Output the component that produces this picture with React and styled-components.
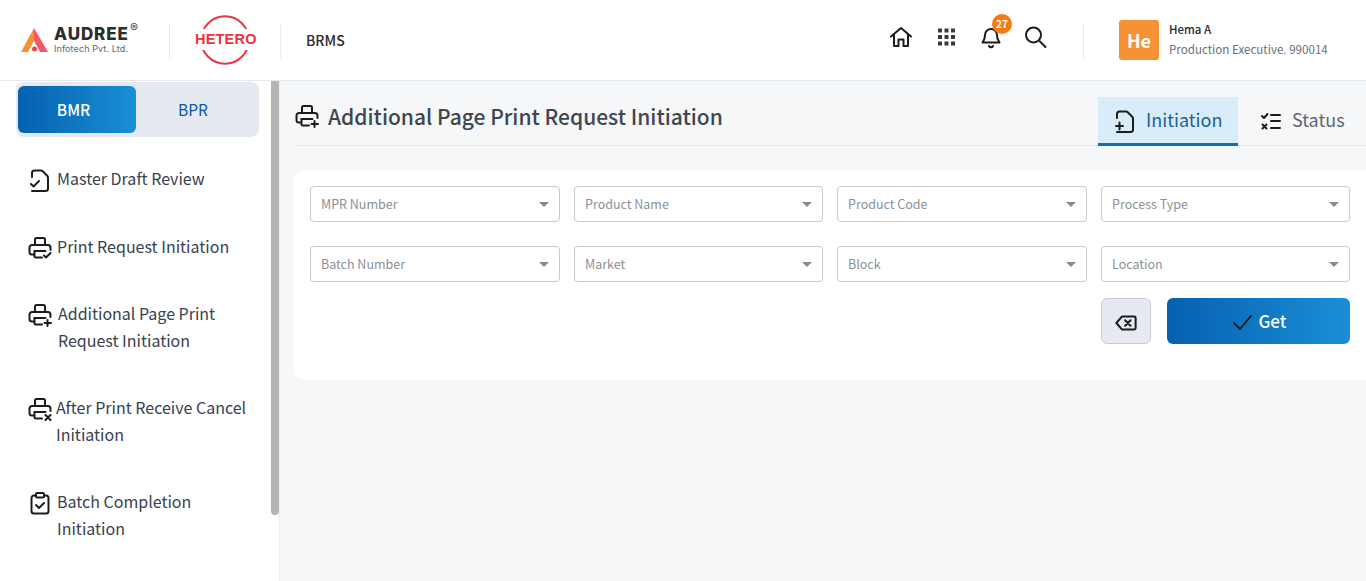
import React from "react"
import styled, { createGlobalStyle } from "styled-components"

const FONT = `"Noto Sans CJK JP", "Noto Sans", sans-serif`
const GRADIENT = "linear-gradient(90deg, #0560b0 0%, #1a8fd6 100%)"

const GlobalStyle = createGlobalStyle`
  html, body {
    margin: 0;
    padding: 0;
    height: 100%;
    overflow: hidden;
    background: #fff;
    font-family: ${FONT};
  }
  * { box-sizing: border-box; }
`

const Page = styled.div`
  width: 1366px;
  height: 581px;
  display: flex;
  flex-direction: column;
  overflow: hidden;
`

const Header = styled.header`
  height: 81px;
  flex: none;
  display: flex;
  align-items: center;
  background: #fff;
  border-bottom: 1px solid #e5e8ee;
`

const LogoCell = styled.div`
  width: 170px;
  height: 35px;
  padding-left: 21px;
  display: flex;
  align-items: center;
  border-right: 1px solid #e8eaee;
`

const AudreeWords = styled.div`
  position: relative;
  margin-left: 6px;
  display: flex;
  flex-direction: column;
  gap: 3px;
  line-height: 1;
`

const AudreeName = styled.span`
  font-family: "Inter", sans-serif;
  font-weight: 800;
  font-size: 17px;
  line-height: 14px;
  letter-spacing: 0.9px;
  color: #2c2c2c;
`

const AudreeSub = styled.span`
  font-family: "Inter", sans-serif;
  font-size: 9px;
  line-height: 10px;
  letter-spacing: 0.1px;
  color: #666;
`

const Registered = styled.span`
  position: absolute;
  left: 76px;
  top: -5px;
  font-family: "Inter", sans-serif;
  font-size: 12px;
  color: #444;
`

const HeteroCell = styled.div`
  width: 111px;
  height: 35px;
  padding-left: 30px;
  display: flex;
  align-items: center;
  border-right: 1px solid #e8eaee;
`

const HeteroMark = styled.div`
  position: relative;
  width: 50px;
  height: 50px;
  flex: none;
`

const HeteroText = styled.span`
  position: absolute;
  left: -5px;
  top: 14px;
  width: 60px;
  text-align: center;
  background: #fff;
  font-family: "Liberation Sans", sans-serif;
  font-weight: 700;
  font-size: 14.5px;
  line-height: 21px;
  letter-spacing: 0.2px;
  color: #ec3340;
`

const AppName = styled.div`
  margin-left: 25px;
  font-size: 14px;
  font-weight: 500;
  color: #2b2b2b;
`

const HeaderRight = styled.div`
  margin-left: auto;
  display: flex;
  align-items: center;
`

const IconRow = styled.div`
  display: flex;
  align-items: center;
  gap: 21px;
  margin-right: 35px;
  margin-bottom: 6px;
`

const IconSlot = styled.div`
  position: relative;
  width: 24px;
  height: 24px;
  color: #1c1c1c;

  svg { display: block; }
`

const Badge = styled.span`
  position: absolute;
  left: 13px;
  top: -11px;
  width: 20px;
  height: 20px;
  border-radius: 50%;
  background: #f57c12;
  color: #fff;
  font-size: 10px;
  font-weight: 700;
  line-height: 20px;
  text-align: center;
`

const UserBox = styled.div`
  width: 283px;
  height: 35px;
  padding-left: 35px;
  display: flex;
  align-items: center;
  border-left: 1px solid #e8eaee;
`

const Avatar = styled.div`
  width: 40px;
  height: 40px;
  border-radius: 3px;
  background: #f79234;
  color: #fff;
  font-size: 18px;
  font-weight: 700;
  display: flex;
  align-items: center;
  justify-content: center;
`

const UserText = styled.div`
  margin-left: 10px;
  margin-bottom: 2px;
  display: flex;
  flex-direction: column;
  gap: 3px;
`

const UserName = styled.span`
  font-size: 11.5px;
  font-weight: 500;
  line-height: 17px;
  color: #2a2a2a;
`

const UserRole = styled.span`
  font-size: 11.6px;
  line-height: 17px;
  color: #68707a;
`

const Body = styled.div`
  flex: 1;
  display: flex;
  min-height: 0;
`

const Sidebar = styled.aside`
  position: relative;
  width: 280px;
  flex: none;
  background: #fff;
  border-right: 1px solid #eceef2;
  padding: 1px 0 0 16px;
  overflow: hidden;
`

const ScrollThumb = styled.div`
  position: absolute;
  left: 271px;
  top: 0;
  width: 8px;
  height: 434px;
  border-radius: 0 0 4px 4px;
  background: #b5b5b5;
`

const ToggleGroup = styled.div`
  width: 243px;
  height: 55px;
  padding: 4px 2px;
  display: flex;
  border-radius: 8px;
  background: #e6e9ef;
`

const ToggleButton = styled.div`
  width: 118px;
  padding: 0 ${p => (p.$active ? 7 : 4)}px 2px 0;
  display: flex;
  align-items: center;
  justify-content: center;
  border-radius: 6px;
  font-size: 15.5px;
  font-weight: ${p => (p.$active ? 500 : 400)};
  color: ${p => (p.$active ? "#fff" : "#0b5aa3")};
  background: ${p => (p.$active ? GRADIENT : "transparent")};
`

const Menu = styled.nav`
  display: flex;
  flex-direction: column;
  padding: 28px 0 0 12px;
`

const MenuItem = styled.div`
  display: flex;
  align-items: flex-start;
  gap: ${p => p.$gap}px;
  width: 232px;
  height: ${p => p.$height}px;
  margin-bottom: ${p => p.$after}px;
  font-size: 16px;
  line-height: 27px;
  color: #39404f;

  svg {
    flex: none;
    margin-top: 3px;
    color: #1c1c1c;
  }
`

const Main = styled.main`
  flex: 1;
  min-width: 0;
  padding: 0 0 0 14px;
  background: #f6f7f9;
`

const TitleBar = styled.div`
  height: 65px;
  display: flex;
  align-items: flex-end;
  justify-content: space-between;
  border-bottom: 1px solid #e5e7eb;
`

const Title = styled.div`
  height: 49px;
  padding: 0 0 10px 1px;
  display: flex;
  align-items: center;
  gap: 9px;
  font-size: 21px;
  font-weight: 500;
  color: #3e4652;

  svg { color: #1c1c1c; }
`

const Tabs = styled.div`
  display: flex;
  margin-bottom: -1px;
`

const Tab = styled.div`
  height: 49px;
  width: ${p => p.$width}px;
  padding: 0 0 2px ${p => p.$inset}px;
  display: flex;
  align-items: center;
  gap: 9px;
  font-size: 18px;
  color: ${p => (p.$active ? "#1f5f95" : "#5e6772")};
  background: ${p => (p.$active ? "#d9ecfa" : "transparent")};
  border-bottom: 3px solid ${p => (p.$active ? "#0f6db8" : "transparent")};

  svg {
    margin-top: 3px;
    color: #1c1c1c;
  }
`

const Card = styled.section`
  margin-top: 24px;
  height: 210px;
  padding: 16px 16px 0 16px;
  background: #fff;
  border-radius: 10px 0 0 10px;
`

const FieldGrid = styled.div`
  display: grid;
  grid-template-columns: 250px 249px 250px 249px;
  column-gap: 14px;
  row-gap: 24px;
  justify-content: space-between;
`

const Select = styled.div`
  height: 36px;
  padding: 0 10px 2px;
  display: flex;
  align-items: center;
  justify-content: space-between;
  border: 1px solid #c8c8c8;
  border-radius: 4px;
  background: #fff;
  font-size: 12.5px;
  color: #8b9097;
`

const Caret = styled.span`
  width: 0;
  height: 0;
  margin-top: 2px;
  border-left: 5px solid transparent;
  border-right: 5px solid transparent;
  border-top: 5px solid #8a8a8a;
`

const Actions = styled.div`
  margin-top: 16px;
  display: flex;
  justify-content: flex-end;
  gap: 16px;
`

const ClearButton = styled.div`
  width: 50px;
  height: 46px;
  padding-top: 3px;
  display: flex;
  align-items: center;
  justify-content: center;
  border: 1px solid #c9cdd3;
  border-radius: 6px;
  background: #e6e9ef;
  color: #1c1c1c;
`

const GetButton = styled.div`
  width: 183px;
  height: 46px;
  padding-bottom: 2px;
  display: flex;
  align-items: center;
  justify-content: center;
  gap: 4px;
  border-radius: 6px;
  background: ${GRADIENT};
  color: #fff;
  font-size: 17px;
  font-weight: 500;

  svg {
    margin-top: 3px;
    color: #1c1c1c;
  }
`

const Stroke = ({ size = 24, width = 2, children }) => (
  <svg
    width={size}
    height={size}
    viewBox="0 0 24 24"
    fill="none"
    stroke="currentColor"
    strokeWidth={width}
    strokeLinecap="round"
    strokeLinejoin="round"
  >
    {children}
  </svg>
)

const PrinterBase = () => (
  <>
    <path d="M7 9V3.5A1.5 1.5 0 0 1 8.500 2h7A1.500 1.500 0 0 1 17 3.500V9" />
    <path d="M6 18.500H4A2.500 2.500 0 0 1 1.500 16v-4.500A2.500 2.500 0 0 1 4 9h16a2.500 2.500 0 0 1 2.500 2.500V14" />
    <path d="M6.500 15h11" />
    <path d="M6.500 15v5A1.500 1.500 0 0 0 8 21.500h6" />
  </>
)

const PrinterPlusIcon = () => (
  <Stroke>
    <PrinterBase />
    <path d="M19.500 17v6M16.500 20H23" />
  </Stroke>
)

const PrinterCheckIcon = () => (
  <Stroke>
    <PrinterBase />
    <path d="M16 19.500l2 2 4.500-4.500" />
  </Stroke>
)

const PrinterCrossIcon = () => (
  <Stroke>
    <PrinterBase />
    <path d="M17.500 18l5 5M22.500 18l-5 5" />
  </Stroke>
)

const FILE_OUTLINE = "M4 9V5a2.500 2.500 0 0 1 2.500-2.500H13c1 0 1.500.5 2 1l4 4c.5.5 1 1 1 2v11a2.500 2.500 0 0 1-2.500 2.500H4"

const FileCheckIcon = () => (
  <Stroke>
    <path d={FILE_OUTLINE} />
    <path d="M3 16l2.500 2.500L11 13" />
  </Stroke>
)

const FilePlusIcon = () => (
  <Stroke>
    <path d={FILE_OUTLINE} />
    <path d="M3 17h7M6.500 13.500v7" />
  </Stroke>
)

const ClipboardIcon = () => (
  <Stroke>
    <path d="M8 4.500H6A2.500 2.500 0 0 0 3.500 7v13A2.500 2.500 0 0 0 6 22.500h12a2.500 2.500 0 0 0 2.500-2.500V7A2.500 2.500 0 0 0 18 4.500h-2" />
    <rect x="8" y="2" width="8" height="4.500" rx="1.200" />
    <path d="M8 14l3 3 5-5" />
  </Stroke>
)

const HomeIcon = () => (
  <Stroke>
    <path d="M2 11.500 12 3l10 8.500" />
    <path d="M5 9.500V21h4.500v-6.500h5V21H19V9.500" />
  </Stroke>
)

const AppsIcon = () => (
  <svg width="24" height="24" viewBox="0 0 24 24" fill="#3a3a3a">
    {[3.5, 10, 16.5].flatMap(y =>
      [4, 10.5, 17].map(x => <rect key={`${x}-${y}`} x={x} y={y} width="4" height="4" />)
    )}
  </svg>
)

const BellIcon = () => (
  <Stroke>
    <path d="M6 10a6 6 0 0 1 12 0c0 5 2 6 2.500 7.500H3.500C4 16 6 15 6 10Z" />
    <path d="M10 21a2.200 2.200 0 0 0 4 0" />
  </Stroke>
)

const SearchIcon = () => (
  <Stroke>
    <circle cx="9.500" cy="10" r="7.500" />
    <path d="M16 16.500 21.500 22" />
  </Stroke>
)

const ChecklistIcon = () => (
  <Stroke>
    <path d="M3 7l2 2 3.500-4M3.500 15.500l4 4M7.500 15.500l-4 4" />
    <path d="M12 6h9M12 12h9M12 19h9" />
  </Stroke>
)

const BackspaceIcon = () => (
  <Stroke size={22} width={2.2}>
    <path d="M7.500 5H21a1.500 1.500 0 0 1 1.500 1.500v11A1.500 1.500 0 0 1 21 19H7.500L1.500 12Z" />
    <path d="m11 9 6 6M17 9l-6 6" />
  </Stroke>
)

const CheckIcon = () => (
  <Stroke width={1.8}>
    <path d="M4 13l6 6L21 6" />
  </Stroke>
)

const AudreeMark = () => (
  <svg width="27" height="24" viewBox="0 0 27 24">
    <path d="M13 0 0 24h7.500L13 13Z" fill="#f79234" />
    <path d="M13 0l14 24h-8l-6-11Z" fill="#f4566a" />
    <path d="M7 24l6-11 6 11Z" fill="#fff" />
    <circle cx="13.500" cy="21" r="2.500" fill="#ee4444" />
  </svg>
)

const HeteroRing = () => (
  <svg width="50" height="50" viewBox="0 0 50 50">
    <circle cx="25" cy="25" r="23.800" fill="none" stroke="#ec3340" strokeWidth="2" />
  </svg>
)

const menuItems = [
  { icon: <FileCheckIcon />, label: "Master Draft Review", height: 27, after: 41, gap: 5 },
  { icon: <PrinterCheckIcon />, label: "Print Request Initiation", height: 27, after: 40, gap: 5 },
  { icon: <PrinterPlusIcon />, label: "Additional Page Print Request Initiation", height: 54, after: 40, gap: 6 },
  { icon: <PrinterCrossIcon />, label: "After Print Receive Cancel Initiation", height: 54, after: 40, gap: 4 },
  { icon: <ClipboardIcon />, label: "Batch Completion Initiation", height: 54, after: 0, gap: 5 },
]

const fields = [
  "MPR Number",
  "Product Name",
  "Product Code",
  "Process Type",
  "Batch Number",
  "Market",
  "Block",
  "Location",
]

export default function App() {
  return (
    <Page>
      <GlobalStyle />
      <Header>
        <LogoCell>
          <AudreeMark />
          <AudreeWords>
            <AudreeName>AUDREE</AudreeName>
            <AudreeSub>Infotech Pvt. Ltd.</AudreeSub>
            <Registered>®</Registered>
          </AudreeWords>
        </LogoCell>
        <HeteroCell>
          <HeteroMark>
            <HeteroRing />
            <HeteroText>HETERO</HeteroText>
          </HeteroMark>
        </HeteroCell>
        <AppName>BRMS</AppName>
        <HeaderRight>
          <IconRow>
            <IconSlot><HomeIcon /></IconSlot>
            <IconSlot><AppsIcon /></IconSlot>
            <IconSlot>
              <BellIcon />
              <Badge>27</Badge>
            </IconSlot>
            <IconSlot><SearchIcon /></IconSlot>
          </IconRow>
          <UserBox>
            <Avatar>He</Avatar>
            <UserText>
              <UserName>Hema A</UserName>
              <UserRole>Production Executive. 990014</UserRole>
            </UserText>
          </UserBox>
        </HeaderRight>
      </Header>
      <Body>
        <Sidebar>
          <ToggleGroup>
            <ToggleButton $active>BMR</ToggleButton>
            <ToggleButton>BPR</ToggleButton>
          </ToggleGroup>
          <Menu>
            {menuItems.map(item => (
              <MenuItem key={item.label} $height={item.height} $after={item.after} $gap={item.gap}>
                {item.icon}
                <span>{item.label}</span>
              </MenuItem>
            ))}
          </Menu>
          <ScrollThumb />
        </Sidebar>
        <Main>
          <TitleBar>
            <Title>
              <PrinterPlusIcon />
              Additional Page Print Request Initiation
            </Title>
            <Tabs>
              <Tab $active $width={140} $inset={15}>
                <FilePlusIcon />
                Initiation
              </Tab>
              <Tab $width={128} $inset={21}>
                <ChecklistIcon />
                Status
              </Tab>
            </Tabs>
          </TitleBar>
          <Card>
            <FieldGrid>
              {fields.map(name => (
                <Select key={name}>
                  {name}
                  <Caret />
                </Select>
              ))}
            </FieldGrid>
            <Actions>
              <ClearButton><BackspaceIcon /></ClearButton>
              <GetButton>
                <CheckIcon />
                Get
              </GetButton>
            </Actions>
          </Card>
        </Main>
      </Body>
    </Page>
  )
}
